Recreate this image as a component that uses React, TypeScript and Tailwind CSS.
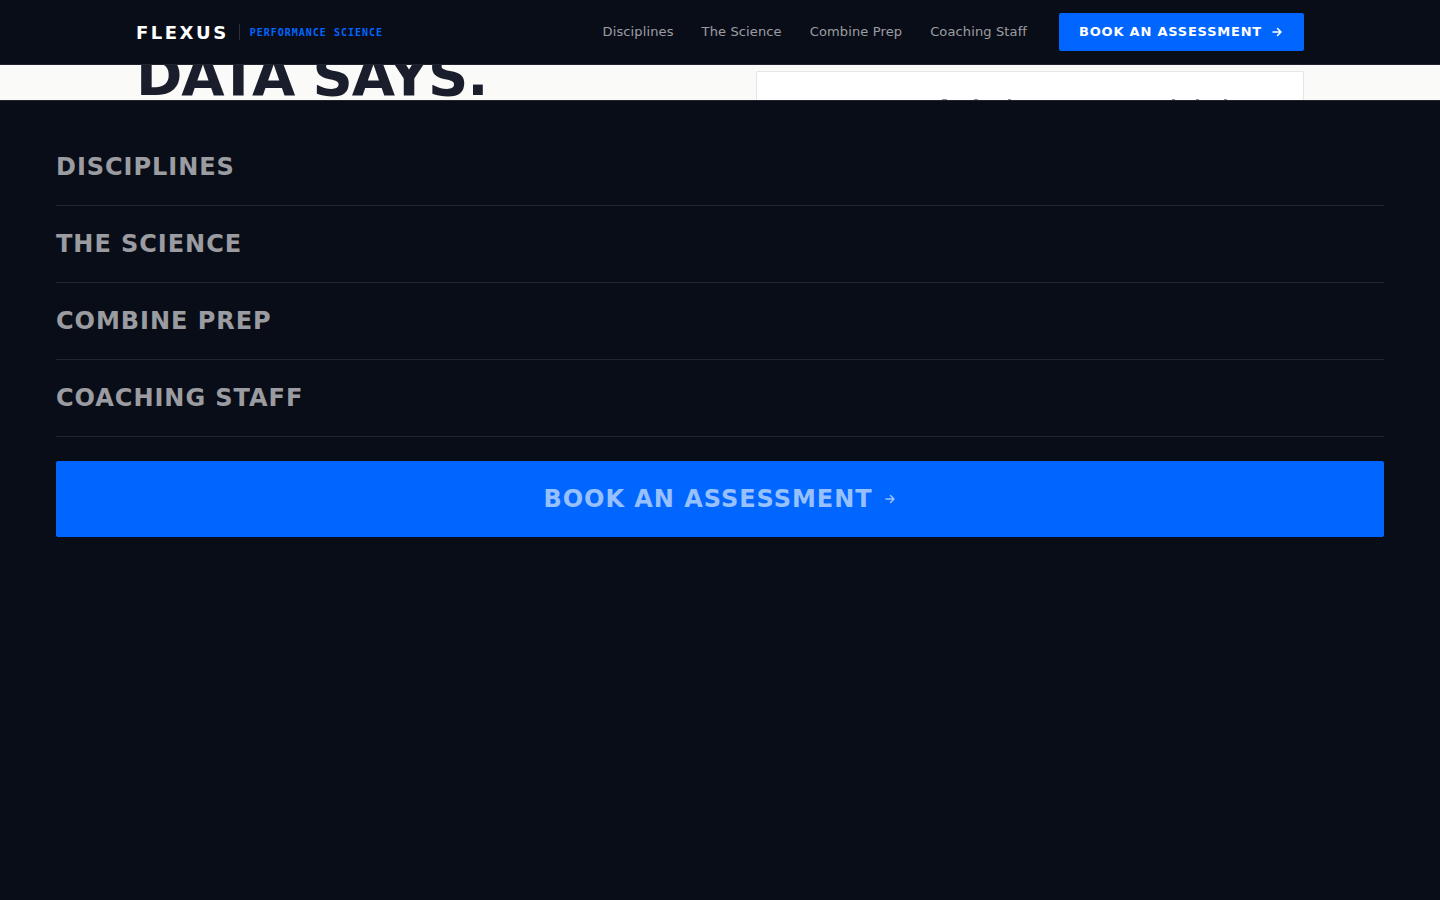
import type { SVGProps } from 'react';

const NAV_LINKS = [
  { label: 'Disciplines', href: '#disciplines' },
  { label: 'The Science', href: '#science' },
  { label: 'Combine Prep', href: '#combine' },
  { label: 'Coaching Staff', href: '#staff' },
];

function ArrowIcon(props: SVGProps<SVGSVGElement>) {
  return (
    <svg
      width="14"
      height="14"
      viewBox="0 0 14 14"
      fill="none"
      stroke="currentColor"
      strokeWidth="1.5"
      strokeLinecap="round"
      strokeLinejoin="round"
      aria-hidden="true"
      {...props}
    >
      <path d="M3 7h8M7.5 3.5 11 7l-3.5 3.5" />
    </svg>
  );
}

function Header() {
  return (
    <header className="border-b border-white/10 bg-[#090d18]">
      <div className="mx-auto flex h-16 max-w-7xl items-center justify-between px-14">
        <a href="#top" className="flex items-center gap-[10px]">
          <span className="text-lg leading-[27px] font-bold tracking-[0.14em] text-white">FLEXUS</span>
          <span className="h-4 w-px bg-white/15" />
          <span className="font-['DejaVu_Sans_Mono',monospace] text-[10px] leading-[15px] font-bold tracking-[0.1em] text-[#0066ff]">
            PERFORMANCE SCIENCE
          </span>
        </a>
        <div className="flex items-center gap-8">
          <nav aria-label="Primary" className="flex items-center gap-7">
            {NAV_LINKS.map((link) => (
              <a
                key={link.href}
                href={link.href}
                className="text-[13px] leading-5 tracking-[0.01em] text-white/60"
              >
                {link.label}
              </a>
            ))}
          </nav>
          <a
            href="#book"
            className="flex h-[38px] items-center gap-2 rounded-xs bg-[#0066ff] px-5 text-[13px] font-bold tracking-[0.06em] text-white"
          >
            BOOK AN ASSESSMENT
            <ArrowIcon />
          </a>
        </div>
      </div>
    </header>
  );
}

/* Sliver of the hero left visible between the header and the open menu */
function HeroPeek() {
  return (
    <section className="h-[35px] overflow-hidden bg-[#fafaf8]">
      <div className="mx-auto grid h-full max-w-7xl grid-cols-[1fr_548px] content-end items-end px-14">
        <h1 className="text-[56px] leading-[48px] font-bold tracking-[-0.02em] text-[#1a1d2b]">
          DATA SAYS.
        </h1>
        <div className="flex h-[29px] items-end rounded-t-xs border border-b-0 border-[#e6e6e6] bg-white">
          <svg width="546" height="1" viewBox="0 0 546 1" stroke="#8b8d93" aria-hidden="true">
            <path d="M185 .5h5M217 .5h4M251 .5h3M415 .5h3M439 .5h3M467 .5h3" />
          </svg>
        </div>
      </div>
    </section>
  );
}

function MobileMenu() {
  return (
    <nav aria-label="Menu" className="grow border-t border-white/10 bg-[#090d18] px-14 pt-7">
      <ul>
        {NAV_LINKS.map((link) => (
          <li key={link.href} className="border-b border-white/10">
            <a
              href={link.href}
              className="block py-5 text-2xl leading-9 font-bold tracking-[0.04em] text-white/60 uppercase"
            >
              {link.label}
            </a>
          </li>
        ))}
      </ul>
      <a
        href="#book"
        className="mt-6 flex items-center justify-center gap-[10px] rounded-xs bg-[#0066ff] py-5 text-2xl leading-9 font-bold tracking-[0.04em] text-white/60"
      >
        BOOK AN ASSESSMENT
        <ArrowIcon />
      </a>
    </nav>
  );
}

export default function App() {
  return (
    <div className="flex min-h-screen flex-col bg-[#090d18] font-['DejaVu_Sans',sans-serif]">
      <Header />
      <HeroPeek />
      <MobileMenu />
    </div>
  );
}
